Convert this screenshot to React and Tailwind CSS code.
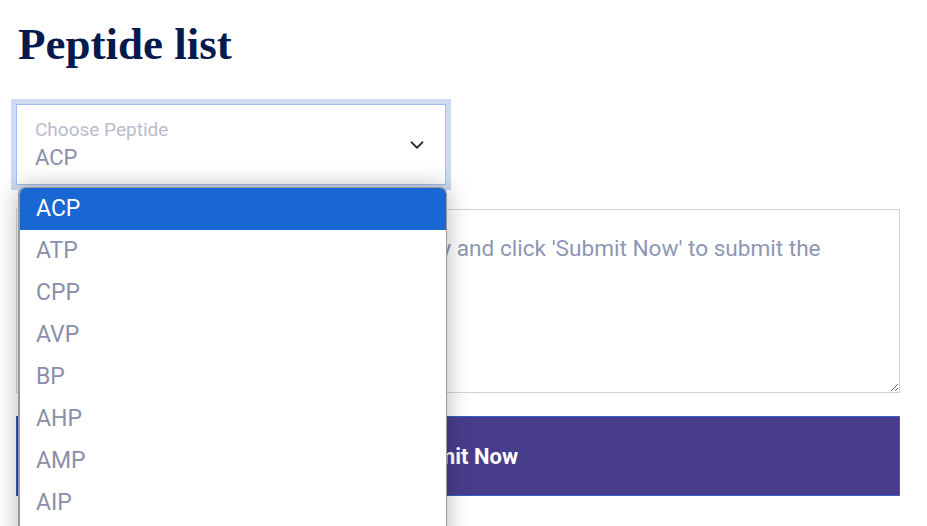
import { ChevronDown } from 'lucide-react';

const peptides = ['ACP', 'ATP', 'CPP', 'AVP', 'BP', 'AHP', 'AMP', 'AIP', 'AOP', 'QSP'];

const App = () => {
    return (
        <div className="min-h-screen bg-white px-4 font-['Roboto',sans-serif]">
            <h1 className="ml-[2px] pt-[16px] text-[45px] leading-[56px] font-bold text-[#061a4d] font-['Liberation_Serif',serif]">
                Peptide list
            </h1>

            <div className="relative mt-[32px] w-[430px]">
                {/* select box */}
                <div className="flex h-[81px] items-center justify-between border border-[#a6bcee] bg-white pl-[18px] pr-[17px] ring-[5px] ring-[#cfdaf2]">
                    <div className="flex flex-col">
                        <span className="text-[19px] leading-[22px] text-[#b8bccb]">Choose Peptide</span>
                        <span className="mt-[4px] text-[22px] leading-[26px] text-[#8c90a9]">ACP</span>
                    </div>
                    <ChevronDown size={22} strokeWidth={2} className="text-[#333]" />
                </div>

                {/* open dropdown */}
                <div className="absolute left-[2px] top-[83px] z-10 w-[429px] overflow-hidden rounded-t-[7px] border border-[#999] border-l-2 bg-white shadow-[0_0_24px_rgba(0,0,0,0.28)]">
                    {peptides.map((p, i) => (
                        <div
                            key={p}
                            className={`flex h-[42px] items-center pl-[16px] text-[23px] ${i === 0 ? 'bg-[#1967d2] text-white' : 'text-[#8a8fa9]'}`}
                        >
                            {p}
                        </div>
                    ))}
                </div>
            </div>

            <div className="mt-[24px] w-[884px]">
                <textarea
                    className="block h-[184px] w-full border border-[#cfd3da] pl-[14px] pr-[19px] pt-[24px] text-[22.6px] leading-[30px] outline-none placeholder:text-[#8d96b3]"
                    placeholder="Enter your sequence in FASTA format only and click 'Submit Now' to submit the sequences."
                />
                <button className="mt-[23px] flex h-[80px] w-full items-center justify-center border border-[#2f5fc8] bg-[#483d8b] text-[22px] font-bold text-white">
                    Submit Now
                </button>
            </div>
        </div>
    );
};

export default App;
